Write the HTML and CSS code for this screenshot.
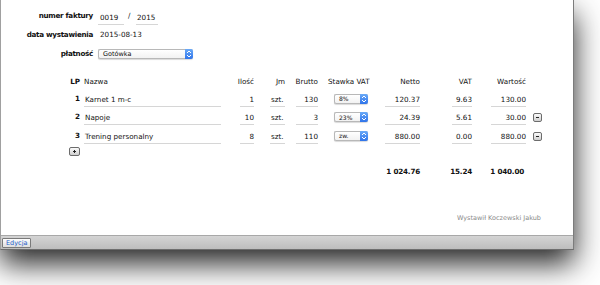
FILE: index.html
```html
<!DOCTYPE html>
<html lang="pl">
<head>
    <meta charset="UTF-8">
    <title>Faktura</title>
    <link rel="stylesheet" href="styles.css">
</head>
<body>
    <div class="window">
        <div class="content">
            <div class="meta">
                <div class="label">numer faktury</div>
                <div class="value">
                    <span class="field field-num">0019</span>
                    <span class="slash">/</span>
                    <span class="field field-year">2015</span>
                </div>

                <div class="label">data wystawienia</div>
                <div class="value">2015-08-13</div>

                <div class="label">płatność</div>
                <div class="value">
                    <div class="select select-wide">
                        <span>Gotówka</span>
                        <span class="stepper"><svg width="6" height="8" viewBox="0 0 6 8"><path d="M1 3 L3 1 L5 3 M1 5 L3 7 L5 5" fill="none" stroke="#fff" stroke-width="1"/></svg></span>
                    </div>
                </div>
            </div>

            <div class="items">
                <div class="head lp">LP</div>
                <div class="head name">Nazwa</div>
                <div class="head num w-qty">Ilość</div>
                <div class="head num w-unit">Jm</div>
                <div class="head num w-gross">Brutto</div>
                <div class="head rate">Stawka VAT</div>
                <div class="head num w-net">Netto</div>
                <div class="head num w-vat">VAT</div>
                <div class="head num w-total">Wartość</div>
                <div></div>

                <div class="lp">1</div>
                <div class="field name">Karnet 1 m-c</div>
                <div class="field num w-qty">1</div>
                <div class="field w-unit">szt.</div>
                <div class="field num w-gross">130</div>
                <div class="rate-cell"><div class="select select-small"><span>8%</span><span class="stepper"><svg width="6" height="8" viewBox="0 0 6 8"><path d="M1 3 L3 1 L5 3 M1 5 L3 7 L5 5" fill="none" stroke="#fff" stroke-width="1"/></svg></span></div></div>
                <div class="field num w-net">120.37</div>
                <div class="field num w-vat">9.63</div>
                <div class="field num w-total">130.00</div>
                <div></div>

                <div class="lp">2</div>
                <div class="field name">Napoje</div>
                <div class="field num w-qty">10</div>
                <div class="field w-unit">szt.</div>
                <div class="field num w-gross">3</div>
                <div class="rate-cell"><div class="select select-small"><span>23%</span><span class="stepper"><svg width="6" height="8" viewBox="0 0 6 8"><path d="M1 3 L3 1 L5 3 M1 5 L3 7 L5 5" fill="none" stroke="#fff" stroke-width="1"/></svg></span></div></div>
                <div class="field num w-net">24.39</div>
                <div class="field num w-vat">5.61</div>
                <div class="field num w-total">30.00</div>
                <div class="btn-cell"><span class="sq-btn minus"></span></div>

                <div class="lp">3</div>
                <div class="field name">Trening personalny</div>
                <div class="field num w-qty">8</div>
                <div class="field w-unit">szt.</div>
                <div class="field num w-gross">110</div>
                <div class="rate-cell"><div class="select select-small"><span>zw.</span><span class="stepper"><svg width="6" height="8" viewBox="0 0 6 8"><path d="M1 3 L3 1 L5 3 M1 5 L3 7 L5 5" fill="none" stroke="#fff" stroke-width="1"/></svg></span></div></div>
                <div class="field num w-net">880.00</div>
                <div class="field num w-vat">0.00</div>
                <div class="field num w-total">880.00</div>
                <div class="btn-cell"><span class="sq-btn minus"></span></div>

                <div class="add-cell"><span class="sq-btn plus"></span></div>

                <div class="sum w-net">1 024.76</div>
                <div class="sum w-vat">15.24</div>
                <div class="sum w-total">1 040.00</div>
            </div>

            <div class="author">Wystawił Koczewski Jakub</div>
        </div>
        <div class="toolbar">
            <button class="edit-button">Edycja</button>
        </div>
    </div>
</body>
</html>
```

FILE: styles.css
```css
html, body {
    height: 285px;
}

body {
    margin: 0;
    background-color: #fff;
    font-family: 'DejaVu Sans', Verdana, sans-serif;
    font-size: 7.2px;
    color: #111;
    overflow: hidden;
    white-space: nowrap;
}

.window {
    width: 574px;
    height: 250px;
    box-sizing: border-box;
    border-left: 1px solid #a0a0a0;
    border-right: 1px solid #7c7c7c;
    border-bottom: 1px solid #6e6e6e;
    box-shadow: 0 14px 28px rgba(0, 0, 0, 0.85);
    display: flex;
    flex-direction: column;
    background-color: #fff;
}

.content {
    height: 235px;
    box-sizing: border-box;
    padding-top: 6px;
}

/* invoice header */
.meta {
    display: grid;
    grid-template-columns: 92px auto;
    column-gap: 5px;
    grid-auto-rows: 19px;
    align-items: center;
}

.label {
    font-weight: bold;
    text-align: right;
    letter-spacing: -0.3px;
}

.value {
    display: flex;
    align-items: center;
    padding-left: 2px;
}

.field {
    border-bottom: 1px solid #d6d6d6;
    height: 15px;
    line-height: 15px;
    box-sizing: border-box;
}

.field-num {
    width: 26px;
    margin-left: -2px;
    padding-left: 2px;
    box-sizing: border-box;
    margin-top: 3px;
}

.field-year {
    width: 22px;
    margin-top: 3px;
    padding-left: 1px;
}

.slash {
    width: 8px;
    padding-left: 4px;
}

.select {
    display: flex;
    align-items: center;
    justify-content: space-between;
    height: 10px;
    box-sizing: border-box;
    border: 1px solid #b8b8b8;
    border-right: none;
    border-radius: 2px;
    background: linear-gradient(#fff, #f2f2f2);
    box-shadow: 0 1px 1px rgba(0, 0, 0, 0.15);
    font-size: 6.5px;
    padding-left: 4px;
}

.select-wide {
    width: 95px;
    margin-left: -2px;
}

.select-small {
    width: 34px;
    font-size: 6px;
}

.stepper {
    width: 8px;
    height: 10px;
    margin-top: -1px;
    margin-bottom: -1px;
    border-radius: 0 2px 2px 0;
    background: linear-gradient(#6aaaf8, #2f74ea);
    display: flex;
    align-items: center;
    justify-content: center;
}

/* items */
.items {
    display: grid;
    grid-template-columns: 18px 141px 34px 32px 32px 51px 51px 51px 55px 15px;
    grid-template-rows: 12px repeat(3, 18.5px) 16px 20px;
    margin-top: 13px;
    margin-left: 61px;
    align-items: end;
}

.head {
    line-height: 12px;
    align-self: center;
    color: #111;
}

.lp {
    font-weight: bold;
    text-align: right;
    line-height: 15px;
    padding-bottom: 1px;
}

.head.lp {
    padding-bottom: 0;
    line-height: 12px;
}

.name {
    margin-left: 4px;
    padding-left: 1px;
    width: 137px;
    justify-self: end;
}

.head.name {
    padding-left: 0;
}

.num {
    text-align: right;
    justify-self: end;
}

.w-qty { width: 14px; margin-right: 1px; }
.w-unit { width: 15px; margin-right: 2px; justify-self: end; padding-left: 1px; box-sizing: border-box; }
.w-gross { width: 22px; margin-right: 1px; }
.w-net { width: 35px; margin-right: 1px; }
.w-vat { width: 20px; }
.w-total { width: 35px; margin-right: 1px; }

.head.w-unit { padding-left: 0; text-align: right; }
.head.w-net, .head.w-vat, .head.w-total, .head.w-qty, .head.w-gross { width: auto; }

.rate {
    margin-left: 9px;
}

.rate-cell {
    display: flex;
    justify-content: flex-end;
    padding-right: 2px;
    padding-bottom: 3px;
}

.btn-cell {
    display: flex;
    justify-content: flex-end;
    padding-bottom: 3px;
}

.sq-btn {
    display: block;
    width: 9px;
    height: 9px;
    box-sizing: border-box;
    border: 1px solid #6c6c6c;
    border-radius: 2px;
    background: linear-gradient(#fbfbfb, #cfcfcf);
    position: relative;
}

.sq-btn::before {
    content: "";
    position: absolute;
    left: 2px;
    top: 3px;
    width: 3px;
    height: 1px;
    background: #222;
}

.plus::after {
    content: "";
    position: absolute;
    left: 3px;
    top: 2px;
    width: 1px;
    height: 3px;
    background: #222;
}

.add-cell {
    grid-column: 1;
    grid-row: 5;
    display: flex;
    justify-content: flex-end;
    align-self: center;
    margin-left: 7px;
}

.add-cell .sq-btn {
    width: 11px;
}

.add-cell .sq-btn::before { left: 3px; }
.add-cell .plus::after { left: 4px; }

.sum {
    grid-row: 6;
    font-weight: bold;
    text-align: right;
    justify-self: end;
    align-self: center;
    width: auto;
    margin-top: 3px;
    letter-spacing: -0.2px;
}

.sum.w-net { grid-column: 7; }
.sum.w-vat { grid-column: 8; }
.sum.w-total { grid-column: 9; margin-right: 3px; }

.author {
    text-align: right;
    padding-right: 32px;
    margin-top: 34px;
    color: #8a8a8a;
    font-size: 6.5px;
}

/* bottom bar */
.toolbar {
    flex: 1;
    border-top: 1px solid #a8a8a8;
    background: linear-gradient(#d4d4d4, #bdbdbd);
    display: flex;
    align-items: center;
    padding-left: 1px;
}

.edit-button {
    font-family: 'DejaVu Sans', Verdana, sans-serif;
    font-size: 6.5px;
    color: #2460c8;
    height: 10px;
    padding: 0 3px;
    line-height: 8px;
    border: 1px solid #7a7a7a;
    border-radius: 1px;
    background: linear-gradient(#fdfdfd, #dedede);
}
```
